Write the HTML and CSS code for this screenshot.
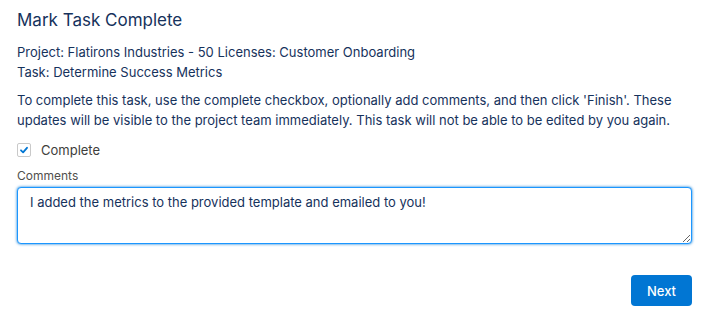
FILE: index.html
```html
<!DOCTYPE html>
<html lang="en">
<head>
    <title>Mark Task Complete</title>
    <link rel="stylesheet" href="styles.css">
</head>
<body>
    <div class="flow">
        <h1 class="flow-title">Mark Task Complete</h1>
        <div class="task-info">
            <p>Project: Flatirons Industries - 50 Licenses: Customer Onboarding</p>
            <p>Task: Determine Success Metrics</p>
        </div>
        <p class="instructions">To complete this task, use the complete checkbox, optionally add comments, and then click 'Finish'. These updates will be visible to the project team immediately. This task will not be able to be edited by you again.</p>

        <label class="checkbox">
            <span class="checkbox-box">
                <svg width="10" height="10" viewBox="0 0 10 10"><path d="M2 5.3 L4.1 7.3 L8 2.8" fill="none" stroke="#0176d3" stroke-width="1.8" stroke-linecap="round" stroke-linejoin="round"/></svg>
            </span>
            <span class="checkbox-label">Complete</span>
        </label>

        <div class="form-group">
            <label for="comments">Comments</label>
            <textarea id="comments">I added the metrics to the provided template and emailed to you!</textarea>
        </div>

        <div class="footer">
            <button class="button">Next</button>
        </div>
    </div>
</body>
</html>
```

FILE: styles.css
```css
body {
    margin: 0;
    font-family: Inter, "Liberation Sans", Arial, sans-serif;
    background-color: white;
    color: #16325c;
}
.flow {
    padding: 8px 21px 0 17px;
}
.flow-title {
    font-size: 17px;
    font-weight: normal;
    margin: 0 0 10px 0;
    line-height: 24px;
}
.task-info p {
    margin: 0;
    font-size: 13px;
    line-height: 20px;
}
.instructions {
    font-size: 13px;
    line-height: 20px;
    margin: 8px 0 10px 0;
}
.checkbox {
    display: flex;
    align-items: center;
    gap: 10px;
    height: 20px;
}
.checkbox-box {
    width: 14px;
    height: 14px;
    border: 1px solid #c9c9c9;
    border-radius: 2px;
    display: flex;
    align-items: center;
    justify-content: center;
    box-sizing: border-box;
}
.checkbox-label {
    font-size: 13px;
    color: #3e3e3c;
}
.form-group {
    margin-top: 8px;
}
.form-group label {
    display: block;
    font-size: 12px;
    color: #514f4d;
    line-height: 16px;
    margin-bottom: 3px;
}
.form-group textarea {
    display: block;
    width: 100%;
    height: 57px;
    box-sizing: border-box;
    font-family: inherit;
    font-size: 13px;
    color: #16325c;
    padding: 6px 12px;
    border: 1px solid #1b96ff;
    border-radius: 4px;
    box-shadow: 0 0 3px #0176d3;
    outline: none;
}
.footer {
    display: flex;
    justify-content: flex-end;
    margin-top: 31px;
}
.button {
    background-color: #0176d3;
    color: white;
    border: none;
    border-radius: 4px;
    font-family: inherit;
    font-size: 13px;
    font-weight: 500;
    width: 61px;
    height: 31px;
    cursor: pointer;
}
```
